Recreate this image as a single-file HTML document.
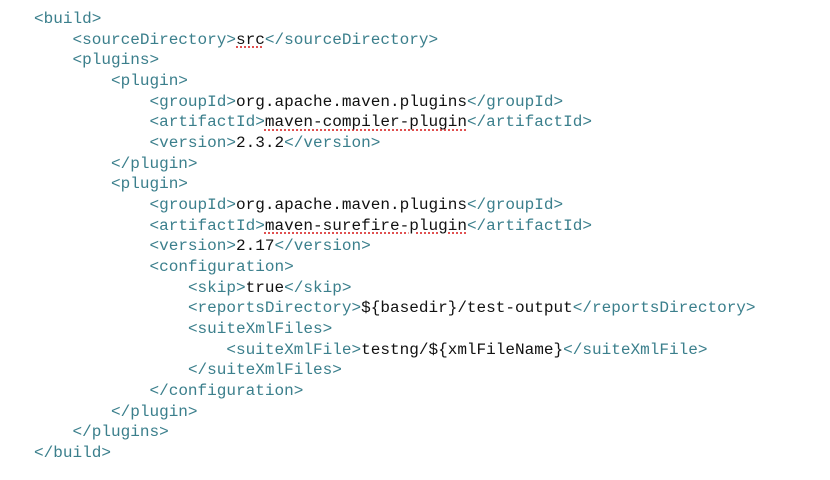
<!DOCTYPE html>
<html><head><meta charset="utf-8"><style>
html,body{margin:0;padding:0;background:#fff;width:830px;height:480px;overflow:hidden}
pre{margin:0;position:absolute;left:34px;top:9px;font-family:"Liberation Mono",monospace;font-size:16.05px;line-height:20.67px;color:#111}
.t{color:#3b7f8c}
.s{text-decoration:underline dotted #e05050;text-decoration-thickness:2px;text-underline-offset:3px}
</style></head><body>
<pre><span class="t">&lt;build&gt;</span>
    <span class="t">&lt;sourceDirectory&gt;</span><span class="s">src</span><span class="t">&lt;/sourceDirectory&gt;</span>
    <span class="t">&lt;plugins&gt;</span>
        <span class="t">&lt;plugin&gt;</span>
            <span class="t">&lt;groupId&gt;</span>org.apache.maven.plugins<span class="t">&lt;/groupId&gt;</span>
            <span class="t">&lt;artifactId&gt;</span><span class="s">maven-compiler-plugin</span><span class="t">&lt;/artifactId&gt;</span>
            <span class="t">&lt;version&gt;</span>2.3.2<span class="t">&lt;/version&gt;</span>
        <span class="t">&lt;/plugin&gt;</span>
        <span class="t">&lt;plugin&gt;</span>
            <span class="t">&lt;groupId&gt;</span>org.apache.maven.plugins<span class="t">&lt;/groupId&gt;</span>
            <span class="t">&lt;artifactId&gt;</span><span class="s">maven-surefire-plugin</span><span class="t">&lt;/artifactId&gt;</span>
            <span class="t">&lt;version&gt;</span>2.17<span class="t">&lt;/version&gt;</span>
            <span class="t">&lt;configuration&gt;</span>
                <span class="t">&lt;skip&gt;</span>true<span class="t">&lt;/skip&gt;</span>
                <span class="t">&lt;reportsDirectory&gt;</span>${basedir}/test-output<span class="t">&lt;/reportsDirectory&gt;</span>
                <span class="t">&lt;suiteXmlFiles&gt;</span>
                    <span class="t">&lt;suiteXmlFile&gt;</span>testng/${xmlFileName}<span class="t">&lt;/suiteXmlFile&gt;</span>
                <span class="t">&lt;/suiteXmlFiles&gt;</span>
            <span class="t">&lt;/configuration&gt;</span>
        <span class="t">&lt;/plugin&gt;</span>
    <span class="t">&lt;/plugins&gt;</span>
<span class="t">&lt;/build&gt;</span></pre>
</body></html>
